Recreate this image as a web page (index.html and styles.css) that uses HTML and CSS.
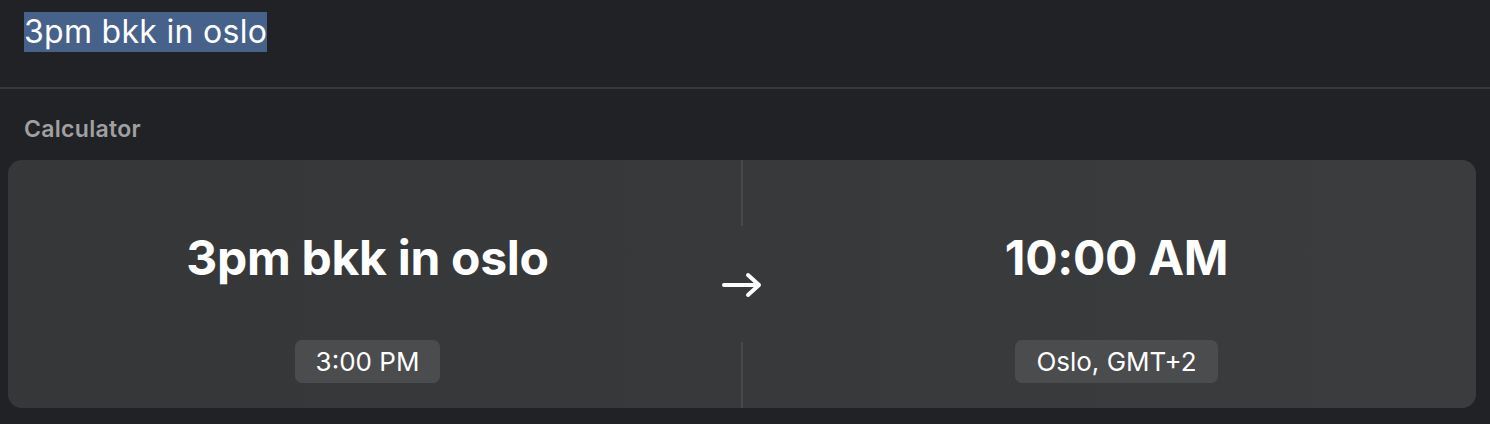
FILE: index.html
```html
<!DOCTYPE html>
<html>
<head>
<meta charset="utf-8">
<link rel="stylesheet" href="styles.css">
</head>
<body>
<div class="search">
  <span class="query">3pm bkk in oslo</span>
</div>
<div class="divider"></div>
<div class="section-title">Calculator</div>
<div class="card">
  <div class="col">
    <div class="big">3pm bkk in oslo</div>
    <div class="badge">3:00 PM</div>
  </div>
  <div class="mid">
    <div class="vline"></div>
    <div class="arrow">
      <svg width="42" height="28" viewBox="0 0 42 28"><path d="M3 14 H38 M27 4 L38 14 L27 24" fill="none" stroke="#fff" stroke-width="4" stroke-linecap="round" stroke-linejoin="round"/></svg>
    </div>
    <div class="vline"></div>
  </div>
  <div class="col">
    <div class="big">10:00 AM</div>
    <div class="badge">Oslo, GMT+2</div>
  </div>
</div>
</body>
</html>
```
FILE: styles.css
```css
html, body {
  margin: 0;
  padding: 0;
  background: #212225;
  font-family: Inter, "Noto Sans", sans-serif;
  color: #fff;
}
body {
  width: 1490px;
  height: 424px;
  overflow: hidden;
}
.search {
  height: 87px;
  padding: 12px 0 0 24px;
  box-sizing: border-box;
}
.query {
  display: inline-block;
  background: #46628a;
  font-size: 32px;
  line-height: 40px;
  height: 40px;
  color: #fff;
  letter-spacing: 0.3px;
}
.divider {
  height: 2px;
  background: #363739;
}
.section-title {
  padding: 26px 0 0 24px;
  height: 71px;
  box-sizing: border-box;
  font-size: 23px;
  font-weight: 600;
  color: #a0a0a2;
  line-height: 28px;
  letter-spacing: 0.3px;
}
.card {
  margin: 0 14px 0 8px;
  height: 248px;
  border-radius: 14px;
  background: linear-gradient(90deg, #363739 0%, #38393b 50%, #3b3c3e 100%);
  display: grid;
  grid-template-columns: 1fr 30px 1fr;
}
.col {
  display: flex;
  flex-direction: column;
  align-items: center;
  padding-top: 70px;
}
.big {
  font-size: 48px;
  font-weight: 700;
  line-height: 56px;
  letter-spacing: -0.3px;
}
.badge {
  margin-top: 54px;
  height: 43px;
  padding: 0 21px;
  border-radius: 7px;
  background: #4b4c4e;
  font-size: 26px;
  line-height: 43px;
  color: #fff;
}
.mid {
  display: flex;
  flex-direction: column;
  align-items: center;
}
.vline {
  width: 2px;
  flex: 1;
  background: #48494b;
}
.arrow {
  height: 116px;
  display: flex;
  align-items: center;
  justify-content: center;
  padding-top: 2px;
  box-sizing: border-box;
}
.arrow svg {
  display: block;
}
```
